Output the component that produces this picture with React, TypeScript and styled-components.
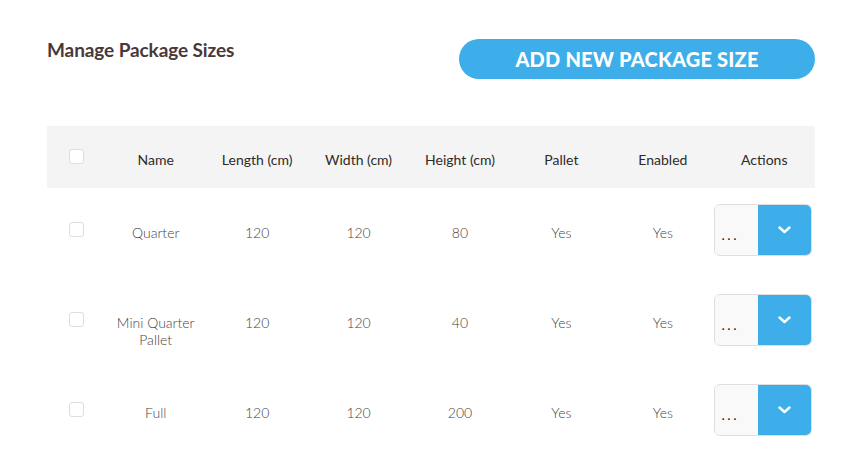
import React from "react";
import styled, { createGlobalStyle } from "styled-components";

const Global = createGlobalStyle`
  html, body { margin: 0; padding: 0; background: #fff; }
  body { font-family: "Lato", "Liberation Sans", sans-serif; }
  * { box-sizing: border-box; }
`;

const Page = styled.div`
  width: 856px;
  padding: 39px 41px 0 47px;
`;

const TopBar = styled.div`
  display: flex;
  justify-content: space-between;
  align-items: flex-start;
  margin-bottom: 47px;
`;

const Title = styled.h1`
  margin: 0;
  font-size: 19px;
  line-height: 22px;
  font-weight: 700;
  color: #4a3838;
  letter-spacing: -0.1px;
`;

const AddButton = styled.button`
  width: 356px;
  height: 40px;
  border: none;
  border-radius: 20px;
  background: #3daeea;
  color: #fff;
  font-family: inherit;
  font-size: 20px;
  font-weight: 900;
  letter-spacing: 0.2px;
  text-transform: uppercase;
  cursor: pointer;
`;

const Row = styled.div<{ $header?: boolean }>`
  display: grid;
  grid-template-columns: 58px repeat(7, minmax(0, 1fr));
  align-items: start;
  height: ${(p) => (p.$header ? 62 : 90)}px;
  padding-top: ${(p) => (p.$header ? 23 : 17)}px;
  background: ${(p) => (p.$header ? "#f4f4f4" : "#fff")};
`;

const Cell = styled.div<{ $header?: boolean; $pad?: number }>`
  text-align: center;
  font-size: 14px;
  line-height: 17px;
  padding-top: ${(p) => p.$pad ?? 0}px;
  font-weight: ${(p) => (p.$header ? 400 : 300)};
  color: ${(p) => (p.$header ? "#2f2a2a" : "#444")};
`;

const CheckCell = styled.div<{ $pad?: number }>`
  display: flex;
  justify-content: center;
  padding-top: ${(p) => p.$pad ?? 0}px;
`;

const Check = styled.span`
  display: block;
  width: 15px;
  height: 15px;
  border: 1px solid #dedede;
  border-radius: 3px;
  background: #fff;
`;

const ActionCell = styled.div`
  display: flex;
  justify-content: center;
  padding-right: 3px;
  margin-top: -1px;
`;

const ActionGroup = styled.div`
  display: flex;
  width: 100px;
  height: 52px;
  border: 1px solid #dedede;
  border-radius: 6px;
  overflow: hidden;
`;

const DotsPart = styled.div`
  width: 43px;
  background: #f9f9f9;
  color: #222;
  font-size: 14px;
  padding: 21px 0 0 7px;
  letter-spacing: 2.5px;
`;

const ArrowPart = styled.div`
  flex: 1;
  background: #3daeea;
  display: flex;
  justify-content: center;
  padding-top: 21px;
`;

const rows = [
  { name: "Quarter", l: 120, w: 120, h: 80 },
  { name: "Mini Quarter Pallet", l: 120, w: 120, h: 40 },
  { name: "Full", l: 120, w: 120, h: 200 },
];

const Chevron = () => (
  <svg width="13" height="8" viewBox="0 0 13 8">
    <path d="M1.5 1.5 L6.5 6 L11.5 1.5" fill="none" stroke="#fff" strokeWidth="2.4" strokeLinecap="round" strokeLinejoin="round" />
  </svg>
);

export default function App() {
  return (
    <Page>
      <Global />
      <TopBar>
        <Title>Manage Package Sizes</Title>
        <AddButton>Add new package size</AddButton>
      </TopBar>
      <Row $header>
        <CheckCell>
          <Check />
        </CheckCell>
        <Cell $header $pad={2}>Name</Cell>
        <Cell $header $pad={2}>Length (cm)</Cell>
        <Cell $header $pad={2}>Width (cm)</Cell>
        <Cell $header $pad={2}>Height (cm)</Cell>
        <Cell $header $pad={2}>Pallet</Cell>
        <Cell $header $pad={2}>Enabled</Cell>
        <Cell $header $pad={2}>Actions</Cell>
      </Row>
      {rows.map((r) => (
        <Row key={r.name}>
          <CheckCell $pad={17}>
            <Check />
          </CheckCell>
          <Cell $pad={19}>{r.name}</Cell>
          <Cell $pad={19}>{r.l}</Cell>
          <Cell $pad={19}>{r.w}</Cell>
          <Cell $pad={19}>{r.h}</Cell>
          <Cell $pad={19}>Yes</Cell>
          <Cell $pad={19}>Yes</Cell>
          <ActionCell>
            <ActionGroup>
              <DotsPart>...</DotsPart>
              <ArrowPart>
                <Chevron />
              </ArrowPart>
            </ActionGroup>
          </ActionCell>
        </Row>
      ))}
    </Page>
  );
}
